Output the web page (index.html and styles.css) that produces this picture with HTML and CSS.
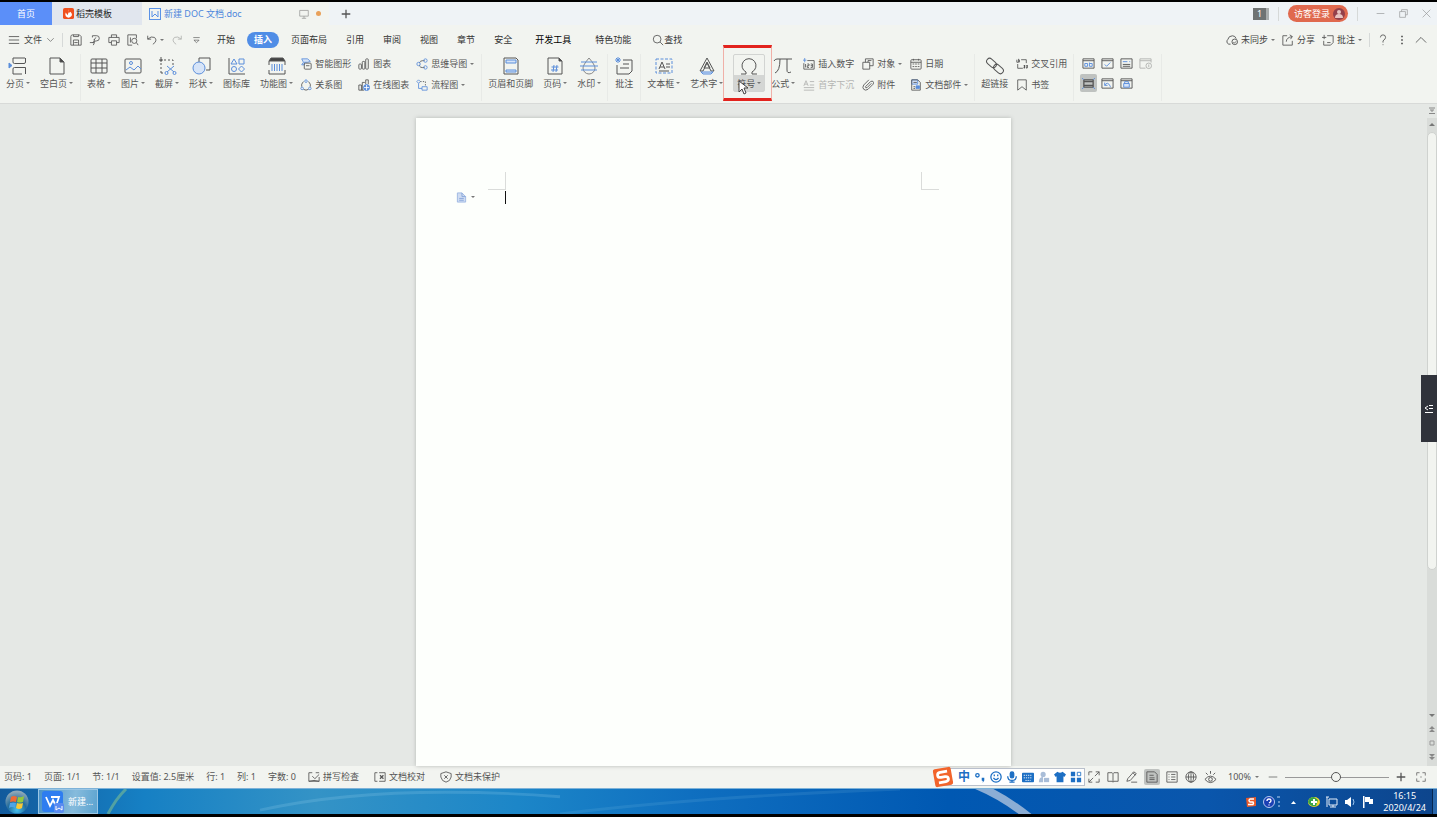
FILE: index.html
```html
<!DOCTYPE html>
<html lang="zh-CN">
<head>
<meta charset="utf-8">
<title>新建 DOC 文档.doc</title>
<link rel="stylesheet" href="styles.css">
</head>
<body>
<svg class="sprite" aria-hidden="true">
  <symbol id="break" viewBox="0 0 20 20"><path d="M5 2v4q0 1.500 1.500 1.500H16q1.500 0 1.500-1.500V2M5 18v-5q0-1.500 1.500-1.500h11V18M5 18h9M5 2h12"/><path class="bb" d="M1 7v5l3-2.500z"/></symbol>
  <symbol id="blank" viewBox="0 0 20 20"><path d="M3 2h10l4 4v12H3z"/><path class="k" d="M13 2v4h4z"/></symbol>
  <symbol id="table" viewBox="0 0 20 20"><rect x="2" y="3" width="16" height="14" rx="1"/><path d="M2 7h16M2 12h16M7 3v14M13 3v14"/></symbol>
  <symbol id="image" viewBox="0 0 20 20"><rect x="2" y="3" width="16" height="14" rx="1"/><path class="b" d="M3 14l4-3 4 3 4-4 3 3"/><circle class="b" cx="8" cy="7" r="1.500"/></symbol>
  <symbol id="snip" viewBox="0 0 20 20"><path stroke-dasharray="2 2" d="M4 17V4h12v6M4 17h4"/><path d="M2 4h4M4 1v5"/><path class="b" d="M10 10l7 6M17 10l-7 6"/><circle class="b" cx="9.500" cy="17" r="1.500"/><circle class="b" cx="17.500" cy="17" r="1.500"/></symbol>
  <symbol id="shapes" viewBox="0 0 20 20"><path d="M8 6V2h11v12h-4"/><circle class="bf" cx="8" cy="12" r="6"/></symbol>
  <symbol id="iconlib" viewBox="0 0 20 20"><path d="M2 2v16h16"/><path class="b" d="M7 3l3 5H4zM12 3h5v5h-5z"/><circle class="b" cx="7" cy="13" r="2.500"/><path class="b" d="M14.500 10l3 3-3 3-3-3z"/></symbol>
  <symbol id="barcode" viewBox="0 0 20 20"><path class="k" d="M4 2h12l2 3H2z"/><path d="M2 5v4M18 5v4M2 14v4h16v-4"/><path class="b" d="M5 8v7M7.500 8v7M10 8v7M12.500 8v7M15 8v7"/></symbol>
  <symbol id="header" viewBox="0 0 20 20"><path d="M3 2h12l2 2v14H3z"/><path class="bf" d="M5 4h10v3H5zM5 14h10v2H5z"/></symbol>
  <symbol id="pageno" viewBox="0 0 20 20"><path d="M3 2h11l3 3v13H3z"/><path class="k" d="M14 2v3h3z"/><path class="b" d="M9 9l-1 7M12 9l-1 7M6.500 11h7M6 14h7"/></symbol>
  <symbol id="water" viewBox="0 0 20 20"><path d="M10 2q6 7 6 10a6 6 0 0 1-12 0q0-3 6-10z" stroke="#888"/><path class="b" d="M2 6h16M1 10h18M2 14h16"/></symbol>
  <symbol id="comment" viewBox="0 0 20 20"><path d="M9 4h9v11l-3 3H3V9"/><path d="M9 8h6M6 12h9"/><path class="b" d="M1 4h6M4 1v6M2 2l4 4M6 2L2 6"/></symbol>
  <symbol id="textbox" viewBox="0 0 20 20"><rect class="b" stroke-dasharray="3 1.500" x="2" y="3" width="16" height="14"/><path d="M5 13l3-7 3 7M6 11h4M12 8h4M12 11h4M5 15h10"/></symbol>
  <symbol id="wordart" viewBox="0 0 20 20"><path d="M10 2l7 13h-3l-4-8-4 8H3zM7 12l3-6 3 6z"/><path class="bf" d="M4 16h12l-2 2H6z"/></symbol>
  <symbol id="omega" viewBox="0 0 20 20"><path d="M2 18h5v-2a7 7 0 1 1 6 0v2h5"/></symbol>
  <symbol id="pi" viewBox="0 0 20 20"><path d="M1 5q1-2 3-2h15M7 3q0 12-5 14M14 3v11q0 4 4 2"/></symbol>
  <symbol id="link" viewBox="0 0 20 20"><rect x="1" y="4" width="11" height="6" rx="3" transform="rotate(42 6.500 7)"/><rect x="8" y="10" width="11" height="6" rx="3" transform="rotate(42 13.500 13)"/></symbol>

  <symbol id="smart" viewBox="0 0 14 14"><path class="bf" d="M2 1h7l3 3-3 1H5v3H2l2-3z"/><rect x="5" y="6" width="8" height="7" rx="1"/><path d="M7 9h4"/></symbol>
  <symbol id="relation" viewBox="0 0 14 14"><path d="M4 3q-3 3-2 6M10 3q3 3 2 6M4 12q3 2 6 0"/><circle class="b" cx="7" cy="2.500" r="1.500"/><circle class="b" cx="2.500" cy="11" r="1.500"/><circle class="b" cx="11.500" cy="11" r="1.500"/></symbol>
  <symbol id="chart" viewBox="0 0 14 14"><rect x="1" y="7" width="3" height="6" rx="1"/><rect x="5" y="4" width="3" height="9" rx="1"/><rect x="9" y="1" width="3" height="12" rx="1"/></symbol>
  <symbol id="webchart" viewBox="0 0 14 14"><path d="M1 13V7h3v6M5 13V4h3M9 6V1h3v5M1 13h6"/><circle class="bb" cx="10" cy="10" r="3.500"/><path class="w" d="M7 10h6M10 7v6"/></symbol>
  <symbol id="mind" viewBox="0 0 14 14"><path d="M4 6q0-3 6-3M4 8q0 4 6 3"/><circle class="b" cx="3" cy="7" r="2"/><circle class="b" cx="11" cy="3" r="2"/><circle class="b" cx="11" cy="11" r="2"/></symbol>
  <symbol id="flow" viewBox="0 0 14 14"><path class="b" d="M3 1l2 2-2 2-2-2zM3 5v6h4M7 9h6v4H7z"/><path stroke-dasharray="1.500 1.500" d="M5 3h6v6"/></symbol>
  <symbol id="num" viewBox="0 0 14 14"><path d="M5 3h8v10H1V6M3 7v4M5 7h2v2H5v2h2M9 7h2v4H9M9 9h2"/><path class="b" d="M2 0v5M0 2.500h4"/></symbol>
  <symbol id="dropcap" viewBox="0 0 14 14"><path d="M1 8l2.500-6L6 8M2 6h3M8 3h5M8 7h5M1 10h12M1 13h12"/></symbol>
  <symbol id="object" viewBox="0 0 14 14"><path d="M4 5V1h9v8H9"/><path d="M1 5h8v8H1zM7 5V3h4"/></symbol>
  <symbol id="clip" viewBox="0 0 14 14"><path d="M11 5l-5 5q-2 1-2-1l6-6q2-1 3 0t0 3l-6 6q-3 2-5 0t0-5l6-6"/></symbol>
  <symbol id="date" viewBox="0 0 14 14"><rect x="1" y="2" width="12" height="11" rx="1"/><path d="M1 5h12M4 1v2M10 1v2M3 7h2M6 7h2M9 7h2M3 10h2M6 10h2M9 10h2"/></symbol>
  <symbol id="parts" viewBox="0 0 14 14"><path class="bf" d="M2 1h7v5H2z"/><path d="M2 1h7l3 3v9H2zM4 4h4M4 9h2M4 11h2"/><path class="bb" d="M7 8h4v3H7z"/></symbol>
  <symbol id="cross" viewBox="0 0 14 14"><path d="M1 2v3h2V1M4 2v3M6 2h6v4M2 7v5h6"/><path d="M9 9h1v2l-1 1M12 9h1v2l-1 1" stroke-width="1.500"/></symbol>
  <symbol id="mark" viewBox="0 0 14 14"><path d="M2 1h10v12L7 9l-5 4z"/></symbol>
  <symbol id="f1" viewBox="0 0 14 14"><path d="M1 2h12v10H1zM1 4h12"/><path class="b" d="M3 7h3v3H3zM8 6v4h3V7H8"/></symbol>
  <symbol id="f2" viewBox="0 0 14 14"><path d="M1 2h12v10H1zM1 4h12"/><path class="b" d="M4 8l2 2 4-4"/></symbol>
  <symbol id="f3" viewBox="0 0 14 14"><path d="M1 2h12v10H1zM3 8h8M3 10h8"/><path class="b" d="M3 5h5M10 5h1"/></symbol>
  <symbol id="f4" viewBox="0 0 14 14"><path d="M7 12H1V2h12v4M1 4h12"/><circle cx="10.500" cy="9.500" r="3"/><path d="M10.500 8v3"/></symbol>
  <symbol id="f5" viewBox="0 0 14 14"><path d="M2 3h10v8H2zM2 5h10M2 9h10" stroke-width="1.400"/><path class="b" d="M0 1l2 2M14 1l-2 2M0 13l2-2M14 13l-2-2"/></symbol>
  <symbol id="f6" viewBox="0 0 14 14"><path d="M1 2h12v10H1zM1 4h12"/><path class="b" d="M4 9q3-5 6 1v1M4 6v3h3"/></symbol>
  <symbol id="f7" viewBox="0 0 14 14"><path d="M1 2h12v10H1zM1 4h12"/><path class="bf" d="M4 7h6v4H4z"/><path class="b" d="M5 7V5h4v2"/></symbol>

  <symbol id="menu" viewBox="0 0 14 14"><path d="M1 3h12M1 7h12M1 11h12"/></symbol>
  <symbol id="down" viewBox="0 0 14 14"><path d="M2 5l5 5 5-5"/></symbol>
  <symbol id="up" viewBox="0 0 14 14"><path d="M1 10l6-6 6 6"/></symbol>
  <symbol id="save" viewBox="0 0 14 14"><path d="M1 3q0-2 2-2h8l2 2v10H1zM4 1v2h6V1M4 13V7h6v6M5 10h4"/></symbol>
  <symbol id="pdf" viewBox="0 0 14 14"><path d="M4 2h5a3 3 0 0 1 0 6q-3 0-5 2M4 2v2M6 6q1 5-1 7M1 10h5M8 4L6 7"/></symbol>
  <symbol id="print" viewBox="0 0 14 14"><path d="M4 4V1h6v3M4 10H1V4h12v6h-3M4 8h6v5H4z"/></symbol>
  <symbol id="preview" viewBox="0 0 14 14"><path d="M6 13H1V1h10v4M4 4v6"/><circle cx="8.500" cy="8" r="3"/><path d="M11 10l2 3"/></symbol>
  <symbol id="undo" viewBox="0 0 14 14"><path d="M2 2v4h4M2 6q4-4 8-2 4 4-2 8"/></symbol>
  <symbol id="redo" viewBox="0 0 14 14"><path d="M12 2v4H8M12 6Q8 2 4 4q-4 4 2 8"/></symbol>
  <symbol id="more" viewBox="0 0 14 14"><path d="M2 4h10M3 8l4 4 4-4z"/></symbol>
  <symbol id="search" viewBox="0 0 14 14"><circle cx="6" cy="6" r="4.500"/><path d="M9.500 9.500L13 13"/></symbol>
  <symbol id="cloud" viewBox="0 0 14 14"><path d="M6 12H4a3 3 0 0 1-1-5q1-4 5-4 3 0 4 3"/><circle cx="10.500" cy="9.500" r="3"/><path d="M9 10l1 1 2-2"/></symbol>
  <symbol id="share" viewBox="0 0 14 14"><path d="M6 2H1v11h11V8M5 9q0-5 7-6M9 1l3 2-2 3"/></symbol>
  <symbol id="note" viewBox="0 0 14 14"><path d="M6 2h7v8l-3 3H2V8M0 4h5M2.500 1v5M6 10h4"/></symbol>
  <symbol id="help" viewBox="0 0 14 14"><path d="M4 4q0-3 3-3t3 3q0 2-3 4v2M7 12v1"/></symbol>
  <symbol id="dots" viewBox="0 0 14 14"><path stroke-width="1.800" d="M6 3h2M6 7h2M6 11h2"/></symbol>
  <symbol id="monitor" viewBox="0 0 14 14"><path d="M1 2h12v8H1zM7 10v3M4 13h6"/></symbol>
  <symbol id="plus" viewBox="0 0 14 14"><path stroke-width="1.800" d="M7 1v12M1 7h12"/></symbol>
  <symbol id="minus" viewBox="0 0 14 14"><path d="M1 7h12"/></symbol>
  <symbol id="restore" viewBox="0 0 14 14"><path d="M4 4V1h9v8h-3M1 4h9v9H1z"/></symbol>
  <symbol id="close" viewBox="0 0 14 14"><path d="M1 1l12 12M13 1L1 13"/></symbol>

  <symbol id="spell" viewBox="0 0 14 14"><path d="M5 2H1v10h12V7M9 2h4M1 12l6-1 6 1M5 6l3 3 5-5"/></symbol>
  <symbol id="proof" viewBox="0 0 14 14"><path d="M4 2H1v10h3M6 2h7v10H6"/><path stroke-width="1.500" d="M7 5l4 4M11 5L7 9"/></symbol>
  <symbol id="shield" viewBox="0 0 14 14"><path d="M7 1l6 2v4q-1 5-6 6-5-1-6-6V3zM5 5l4 4M9 5L5 9"/></symbol>
  <symbol id="expand" viewBox="0 0 14 14"><path d="M5 1H1v4M9 1h4v4M1 9v4h4M13 9v4H9M13 1L8 6M1 13l5-5"/></symbol>
  <symbol id="book" viewBox="0 0 14 14"><path d="M1 2h5l1 1 1-1h5v10H8l-1 1-1-1H1zM7 3v10"/></symbol>
  <symbol id="pen" viewBox="0 0 14 14"><path d="M2 9l7-8 3 2-7 8-4 1zM6 13h7M8 2l3 3"/></symbol>
  <symbol id="doc" viewBox="0 0 14 14"><path d="M1 1h9l3 3v9H1zM4 5h5M4 8h6M4 10h6"/></symbol>
  <symbol id="outline" viewBox="0 0 14 14"><path d="M1 1h12v12H1zM3 4h1M6 4h5M3 7h1M6 7h5M3 10h1M6 10h5"/></symbol>
  <symbol id="globe" viewBox="0 0 14 14"><circle cx="7" cy="7" r="6"/><ellipse cx="7" cy="7" rx="3" ry="6"/><path d="M1 7h12M7 1v12"/></symbol>
  <symbol id="eye" viewBox="0 0 14 14"><path d="M1 9q6-7 12 0-6 7-12 0zM2 2l2 2M7 0v3M12 2l-2 2"/><circle cx="7" cy="9" r="2"/></symbol>
  <symbol id="full" viewBox="0 0 14 14"><path d="M5 1H1v4M9 1h4v4M1 9v4h4M13 9v4H9M6 7h2"/></symbol>
</svg>

<header class="titlebar">
  <nav class="doctabs">
    <button class="doctab home">首页</button>
    <button class="doctab shell">
      <svg class="s11" viewBox="0 0 12 12"><rect width="12" height="12" rx="2" fill="#f0501e"/><path d="M6 1q1 3 0 4 2 0 2-1 3 3 1 5-3 3-6 0-1-2 0-4l2 3q2-3 1-7z" fill="#fff"/></svg>
      稻壳模板</button>
    <button class="doctab active">
      <svg class="s12" viewBox="0 0 12 12" fill="none" stroke="#5a92e6"><rect x=".5" y=".5" width="11" height="11"/><path d="M3 3v6l3-3 3 3V3"/></svg>
      <span>新建 DOC 文档.doc</span>
      <svg class="i s10 dim"><use href="#monitor"/></svg><i class="dot"></i></button>
    <button class="newtab" aria-label="新建"><svg class="i s10"><use href="#plus"/></svg></button>
  </nav>
  <div class="winctl">
    <span class="count">1</span><i class="vsep"></i>
    <button class="login">访客登录 <svg class="s12" viewBox="0 0 12 12"><circle cx="6" cy="6" r="6" fill="#94404a"/><circle cx="6" cy="4" r="2" fill="#e8c4c0"/><path d="M2 10q0-4 4-4t4 4z" fill="#e8c4c0"/></svg></button>
    <i class="vsep"></i>
    <button aria-label="最小化"><svg class="i s9 dim"><use href="#minus"/></svg></button>
    <button aria-label="还原"><svg class="i s9 dim"><use href="#restore"/></svg></button>
    <button aria-label="关闭"><svg class="i s9 dim"><use href="#close"/></svg></button>
  </div>
</header>

<div class="menubar">
  <div class="quick">
    <button class="file"><svg class="i s12"><use href="#menu"/></svg>文件<svg class="i s9"><use href="#down"/></svg></button>
    <i class="vsep"></i>
    <button aria-label="保存"><svg class="i s12"><use href="#save"/></svg></button>
    <button aria-label="输出为PDF"><svg class="i s12"><use href="#pdf"/></svg></button>
    <button aria-label="打印"><svg class="i s12"><use href="#print"/></svg></button>
    <button aria-label="打印预览"><svg class="i s12"><use href="#preview"/></svg></button>
    <button class="c" aria-label="撤销"><svg class="i s12"><use href="#undo"/></svg></button>
    <button class="off" aria-label="恢复"><svg class="i s12"><use href="#redo"/></svg></button>
    <button class="qmore" aria-label="更多"><svg class="i s9"><use href="#more"/></svg></button>
  </div>
  <nav class="tabs">
    <button>开始</button><button class="on">插入</button><button>页面布局</button><button>引用</button><button>审阅</button><button>视图</button><button>章节</button><button>安全</button><button class="dev">开发工具</button><button class="dev2">特色功能</button>
    <button class="find"><svg class="i s12"><use href="#search"/></svg>查找</button>
  </nav>
  <div class="account">
    <button class="c"><svg class="i s13"><use href="#cloud"/></svg>未同步</button>
    <button><svg class="i s12"><use href="#share"/></svg>分享</button>
    <button class="c"><svg class="i s12"><use href="#note"/></svg>批注</button>
    <i class="vsep"></i>
    <button aria-label="帮助"><svg class="i s12"><use href="#help"/></svg></button>
    <button aria-label="更多"><svg class="i s12"><use href="#dots"/></svg></button>
    <button aria-label="收起"><svg class="i s12"><use href="#up"/></svg></button>
  </div>
</div>

<div class="ribbon">
  <section><div class="bigs">
    <button class="big"><svg class="i s20"><use href="#break"/></svg><span class="c">分页</span></button>
    <button class="big"><svg class="i s20"><use href="#blank"/></svg><span class="c">空白页</span></button>
  </div></section>
  <section><div class="bigs">
    <button class="big"><svg class="i s20"><use href="#table"/></svg><span class="c">表格</span></button>
    <button class="big"><svg class="i s20"><use href="#image"/></svg><span class="c">图片</span></button>
    <button class="big"><svg class="i s20"><use href="#snip"/></svg><span class="c">截屏</span></button>
    <button class="big"><svg class="i s20"><use href="#shapes"/></svg><span class="c">形状</span></button>
    <button class="big"><svg class="i s20"><use href="#iconlib"/></svg><span>图标库</span></button>
    <button class="big"><svg class="i s20"><use href="#barcode"/></svg><span class="c">功能图</span></button>
  </div>
    <div class="col"><button><svg class="i s12"><use href="#smart"/></svg>智能图形</button><button><svg class="i s12"><use href="#relation"/></svg>关系图</button></div>
    <div class="col"><button><svg class="i s12"><use href="#chart"/></svg>图表</button><button><svg class="i s12"><use href="#webchart"/></svg>在线图表</button></div>
    <div class="col"><button class="c"><svg class="i s12"><use href="#mind"/></svg>思维导图</button><button class="c"><svg class="i s12"><use href="#flow"/></svg>流程图</button></div>
  </section>
  <section class="tight"><div class="bigs">
    <button class="big"><svg class="i s20"><use href="#header"/></svg><span>页眉和页脚</span></button>
    <button class="big"><svg class="i s20"><use href="#pageno"/></svg><span class="c">页码</span></button>
    <button class="big"><svg class="i s20"><use href="#water"/></svg><span class="c">水印</span></button>
  </div></section>
  <section class="tight"><div class="bigs">
    <button class="big"><svg class="i s20"><use href="#comment"/></svg><span>批注</span></button>
  </div></section>
  <section class="tight wide"><div class="bigs">
    <button class="big"><svg class="i s20"><use href="#textbox"/></svg><span class="c">文本框</span></button>
    <button class="big"><svg class="i s20"><use href="#wordart"/></svg><span class="c">艺术字</span></button>
    <div class="symbol">
      <button class="big hot"><svg class="i s20"><use href="#omega"/></svg><span class="c">符号</span></button>
      <div class="frame"></div>
      <svg class="pointer" viewBox="0 0 10 15"><path d="M1 1v11l3-3 2 5 2-1-2-5h4z" fill="#fff" stroke="#444"/></svg>
    </div>
    <button class="big"><svg class="i s20"><use href="#pi"/></svg><span class="c">公式</span></button>
  </div>
    <div class="col"><button><svg class="i s12"><use href="#num"/></svg>插入数字</button><button class="off" disabled><svg class="i s12"><use href="#dropcap"/></svg>首字下沉</button></div>
    <div class="col"><button class="c"><svg class="i s12"><use href="#object"/></svg>对象</button><button><svg class="i s12"><use href="#clip"/></svg>附件</button></div>
    <div class="col"><button><svg class="i s12"><use href="#date"/></svg>日期</button><button class="c"><svg class="i s12"><use href="#parts"/></svg>文档部件</button></div>
  </section>
  <section class="tight wide"><div class="bigs">
    <button class="big"><svg class="i s20"><use href="#link"/></svg><span>超链接</span></button>
  </div>
    <div class="col"><button><svg class="i s12"><use href="#cross"/></svg>交叉引用</button><button><svg class="i s12"><use href="#mark"/></svg>书签</button></div>
  </section>
  <section><div class="forms">
    <button aria-label="文字型窗体域"><svg class="i s13"><use href="#f1"/></svg></button>
    <button aria-label="复选框"><svg class="i s13"><use href="#f2"/></svg></button>
    <button aria-label="下拉型窗体域"><svg class="i s13"><use href="#f3"/></svg></button>
    <button class="off" aria-label="窗体域选项" disabled><svg class="i s13"><use href="#f4"/></svg></button>
    <button class="pressed" aria-label="窗体域底纹"><svg class="i s13"><use href="#f5"/></svg></button>
    <button aria-label="重新设置窗体域"><svg class="i s13"><use href="#f6"/></svg></button>
    <button aria-label="保护窗体"><svg class="i s13"><use href="#f7"/></svg></button>
  </div></section>
</div>

<main class="work">
  <div class="desk">
    <article class="page">
      <div class="corners"><i class="tl"></i><i class="tr"></i></div>
      <div class="line">
        <button class="c" aria-label="粘贴选项"><svg class="s11" viewBox="0 0 11 12"><path d="M1 1h5l4 4v6H1z" fill="#cfdcf2" stroke="#9db7e2"/><path d="M6 1v4h4M3 7h5M3 9h5" stroke="#86a5da" fill="none"/></svg></button>
        <i class="cursor"></i>
      </div>
    </article>
  </div>
  <div class="scroll">
    <button class="ruler" aria-label="标尺"><svg viewBox="0 0 8 8" fill="none" stroke="#888"><path d="M1 1h6M2 3h4M4 3v2M1 6.500h6"/></svg></button>
    <div class="track">
      <button aria-label="向上"><svg viewBox="0 0 8 8" fill="#777"><path d="M1 5h6L4 2z"/></svg></button>
      <div class="rail"><div class="thumb"></div></div>
      <button aria-label="向下"><svg viewBox="0 0 8 8" fill="#777"><path d="M1 3h6L4 6z"/></svg></button>
      <button aria-label="上一页"><svg viewBox="0 0 8 8" fill="#888"><path d="M1 4h6L4 1zM1 7h6L4 4z"/></svg></button>
      <button aria-label="选择浏览对象"><svg viewBox="0 0 8 8" fill="none" stroke="#999"><path d="M2 2h4v4H2z"/></svg></button>
      <button aria-label="下一页"><svg viewBox="0 0 8 8" fill="#888"><path d="M1 1h6L4 4zM1 4h6L4 7z"/></svg></button>
    </div>
  </div>
  <button class="drawer" aria-label="展开侧栏"><svg viewBox="0 0 10 10" fill="none" stroke="#fff"><path d="M5 1.500h4M5 4.500h4M1 8.500h8M4 2L1 4l3 2"/></svg></button>
</main>

<footer class="status">
  <div class="info">
    <span>页码: 1</span><span>页面: 1/1</span><span>节: 1/1</span><span>设置值: 2.5厘米</span><span>行: 1</span><span>列: 1</span><span>字数: 0</span>
    <button><svg class="i s12"><use href="#spell"/></svg>拼写检查</button>
    <button><svg class="i s12"><use href="#proof"/></svg>文档校对</button>
    <button><svg class="i s12"><use href="#shield"/></svg>文档未保护</button>
  </div>
  <div class="views">
    <div class="ime">
      <svg class="slogo" viewBox="0 0 22 22"><g transform="rotate(-10 11 11)"><rect x="2" y="2" width="18" height="18" rx="2" fill="#f2642b"/><path d="M16 6H9q-3 0-3 2.500T9 11h4q3 0 3 2.500T13 16H6" fill="none" stroke="#fff" stroke-width="2.800"/></g></svg>
      <b>中</b>
      <svg class="s12" viewBox="0 0 14 14"><circle cx="4" cy="5" r="2" fill="none" stroke="#1d6fc4" stroke-width="1.500"/><path d="M9 8h3v3l-2 3q1-3-1-3z" fill="#1d6fc4"/></svg>
      <svg class="s12" viewBox="0 0 14 14" fill="none" stroke="#1d6fc4" stroke-width="1.500"><circle cx="7" cy="7" r="6"/><path d="M4 8q3 4 6 0M5 4v2M9 4v2"/></svg>
      <svg class="s12" viewBox="0 0 14 14" fill="none" stroke="#1d6fc4" stroke-width="1.500"><rect x="5" y="1" width="4" height="7" rx="2" fill="#1d6fc4"/><path d="M2 6q0 5 5 5t5-5M7 11v2M4 13h6"/></svg>
      <svg class="s12" viewBox="0 0 14 14"><rect x="0" y="2" width="14" height="11" rx="1" fill="#1d6fc4"/><path d="M2 5h10M2 8h10M4 11h6" stroke="#fff" stroke-dasharray="1.500 1"/></svg>
      <svg class="s12" viewBox="0 0 14 14" fill="#a9bdd8"><circle cx="6" cy="4" r="3"/><path d="M1 13q0-6 5-6v6z"/><rect x="7" y="8" width="6" height="5"/></svg>
      <svg class="s12" viewBox="0 0 14 14" fill="#1d6fc4"><path d="M4 1q3 2 6 0l4 3-2 3-1-1v7H3V6L2 7 0 4z"/></svg>
      <svg class="s12" viewBox="0 0 14 14" fill="#1d6fc4"><path d="M1 1h5v5H1zM1 8h5v5H1zM8 8h5v5H8z"/><path d="M8.500 1.500h4v4h-4z" fill="none" stroke="#1d6fc4"/></svg>
    </div>
    <button aria-label="全屏"><svg class="i s12"><use href="#expand"/></svg></button>
    <button aria-label="阅读版式"><svg class="i s12"><use href="#book"/></svg></button>
    <button aria-label="写作模式"><svg class="i s12"><use href="#pen"/></svg></button>
    <button class="pressed" aria-label="页面视图"><svg class="i s12"><use href="#doc"/></svg></button>
    <button aria-label="大纲"><svg class="i s12"><use href="#outline"/></svg></button>
    <button aria-label="Web版式"><svg class="i s12"><use href="#globe"/></svg></button>
    <button aria-label="护眼模式"><svg class="i s13"><use href="#eye"/></svg></button>
    <button class="c zoom">100%</button>
    <button aria-label="缩小"><svg class="i s10 thick"><use href="#minus"/></svg></button>
    <input type="range" aria-label="显示比例" min="0" max="100" value="49">
    <button aria-label="放大"><svg class="i s10"><use href="#plus"/></svg></button>
    <button class="fit" aria-label="最佳显示比例"><svg class="i s10"><use href="#full"/></svg></button>
  </div>
</footer>

<div class="taskbar">
  <svg class="streaks" viewBox="0 0 1437 26" preserveAspectRatio="none" fill="none">
    <path d="M126 0q-10 10-18 26" stroke="#8fc98a" stroke-width="3" opacity=".5"/>
    <path d="M260 22Q380-6 560 8" stroke="#9fd6ee" stroke-width="3" opacity=".2"/>
    <path d="M560 26Q700 8 900 0" stroke="#9fd6ee" stroke-width="3" opacity=".12"/>
    <path d="M976-4q28 12 54 34" stroke="#c6d2e4" stroke-width="8" opacity=".7"/>
  </svg>
  <div class="apps">
    <button class="start" aria-label="开始"><svg viewBox="0 0 24 24"><defs><radialGradient id="orb" cx=".5" cy=".85" r=".8"><stop offset="0" stop-color="#45c0ee"/><stop offset=".5" stop-color="#246c9c"/><stop offset="1" stop-color="#8fa8b8"/></radialGradient></defs><circle cx="12" cy="12" r="11.500" fill="url(#orb)"/><path d="M6 7q3-2 6 0l-1 5q-3-1-6 0z" fill="#ee6a35"/><path d="M13 7q3 1 6-1l-1 6q-3 1-6 0z" fill="#94c83d"/><path d="M5 13q3-1 6 0l-1 5q-3-2-6 0z" fill="#4fa4e8"/><path d="M12 13q3 1 6 0l-1 5q-3 2-6 0z" fill="#fbc935"/></svg></button>
    <button class="app"><svg viewBox="0 0 22 22"><rect width="21" height="21" rx="3" fill="#2e7df0"/><path d="M4 6l4 9 3-6 3 6 3-9H9" fill="none" stroke="#fff" stroke-width="1.800"/><rect x="12" y="12" width="10" height="10" rx="2" fill="#5a8bf0"/><path d="M14 15v4l3-2 3 2v-4" fill="none" stroke="#fff"/></svg>新建...</button>
  </div>
  <div class="tray">
    <svg class="s12" viewBox="0 0 12 12"><path d="M1 2l10-1v9L2 11z" fill="#e85a2a"/><path d="M9 3H5q-2 1.500 0 3h3q1 1.500 0 2.500H3" fill="none" stroke="#fff" stroke-width="1.500"/></svg>
    <svg class="s12" viewBox="0 0 12 12"><circle cx="6" cy="6" r="5.500" fill="#1a3fb4" stroke="#b9c8ee"/><path d="M4 5q0-2 2-2t2 1.500Q8 6 6 7M6 8.500v1" fill="none" stroke="#fff" stroke-width="1.300"/></svg>
    <svg class="tiny" viewBox="0 0 4 12"><path d="M0 1h3M1 6h2M1 10h2" stroke="#b9d4f0"/></svg>
    <svg class="arrow" viewBox="0 0 8 8"><path d="M1 6h5L3.500 3z" fill="#fff"/></svg>
    <svg class="s12" viewBox="0 0 12 12"><ellipse cx="6" cy="6" rx="6" ry="5" fill="#f3d22c"/><path d="M0 6q1-5 6-5l4 3-2 6q-6 1-8-4z" fill="#3aa648"/><path d="M6 3v6M3 6h6" stroke="#fff" stroke-width="2"/></svg>
    <svg class="s12" viewBox="0 0 12 12" fill="none" stroke="#e6eef8"><path d="M3 3h8v6H3zM7 9v2M4 11h6M1 1v10M0 1h3"/></svg>
    <svg class="s12" viewBox="0 0 12 12"><path d="M1 4h2l4-3v10L3 8H1z" fill="#fff"/><path d="M9 3q2 3 0 6" fill="none" stroke="#9cc4ec"/></svg>
    <svg class="s12" viewBox="0 0 12 12" fill="#fff"><path d="M1 0h1.500v12H1zM3 1h5v2h3v5H7V6H3z"/></svg>
    <time>16:15<br>2020/4/24</time>
    <i class="peek"></i>
  </div>
</div>
</body>
</html>
```
FILE: styles.css
```css
* { box-sizing: border-box; }
body {
  margin: 0;
  min-height: 100vh;
  display: flex;
  flex-direction: column;
  background: #f2f4f0;
  border-top: 2px solid #000;
  border-bottom: 3px solid #000;
  font: 9px/12px "Noto Sans", "Noto Sans CJK SC", sans-serif;
  color: #444;
  white-space: nowrap;
  overflow: hidden;
}
button {
  display: flex;
  align-items: center;
  gap: 3px;
  margin: 0;
  padding: 0;
  border: 0;
  background: none;
  font: inherit;
  color: inherit;
}
svg { display: block; flex: none; }
.sprite { position: absolute; width: 0; height: 0; }
.i, symbol { fill: none; stroke: #555; stroke-width: 1; }
.b { stroke: #5b8edb; }
.bf { stroke: #5b8edb; fill: #d6e4f8; }
.bb { stroke: #5b8edb; fill: #5b8edb; }
.k { fill: #444; }
.w { stroke: #fff; }
.s9 { width: 9px; height: 9px; }
.s10 { width: 10px; height: 10px; }
.s11 { width: 11px; height: 11px; }
.s12 { width: 12px; height: 12px; }
.s13 { width: 13px; height: 13px; }
.s20 { width: 20px; height: 20px; }
.dim { opacity: .6; }
.thick { stroke-width: 2; }
.off { opacity: .4; }
.c::after {
  content: "";
  flex: none;
  border: 2px solid transparent;
  border-top-color: #777;
  border-bottom: 0;
}
.vsep { width: 1px; height: 14px; background: #d6d9d8; }

/* Title bar */
.titlebar {
  height: 23px;
  display: flex;
  justify-content: space-between;
  background: #eff3f6;
}
.doctabs { display: flex; }
.doctab { height: 23px; }
.home { width: 52px; justify-content: center; background: #5b8ff9; color: #fff; }
.shell { width: 90px; padding-left: 11px; gap: 2px; background: #e1e6ee; color: #222; }
.active { width: 187px; padding: 0 8px 0 7px; background: #f2f4f0; color: #4d86dc; }
.active span { flex: 1; text-align: left; }
.dot { width: 5px; height: 5px; margin-left: 4px; border-radius: 50%; background: #e9a15a; }
.newtab { padding: 0 12px; }
.winctl { display: flex; align-items: center; gap: 9px; padding-right: 6px; }
.winctl button + button { margin-left: 5px; }
.winctl .vsep + button:not(.login) { margin-left: 9px; }
.count { width: 16px; text-align: center; background: #6f7373; border-right: 3px solid #a9adad; color: #fff; }
.login { height: 17px; padding: 0 3px 0 6px; border-radius: 9px; background: #e0694e; color: #fff; }

/* Menu bar */
.menubar { height: 29px; display: flex; align-items: center; }
.quick { display: flex; align-items: center; gap: 7px; padding-left: 8px; }
.file { gap: 4px; }
.quick .c { gap: 2px; }
.qmore { margin-left: 2px; }
.tabs { display: flex; flex: 1; gap: 5px; padding-left: 9px; }
.tabs button { height: 16px; padding: 0 7px; border-radius: 8px; color: #333; }
.tabs .on { background: #508de6; color: #fff; font-weight: bold; }
.tabs .dev { margin-left: 4px; color: #000; }
.tabs .dev2 { margin-left: 5px; }
.tabs .find { margin-left: 2px; gap: 0; }
.account { display: flex; align-items: center; gap: 7px; padding-right: 10px; }

/* Ribbon */
.ribbon {
  height: 50px;
  display: flex;
  border-bottom: 1px solid #d8dad8;
  color: #555;
}
.ribbon section {
  display: flex;
  gap: 7px;
  height: 47px;
  padding: 2px 7px 0 6px;
  border-right: 1px solid #e8eae7;
}
.ribbon .tight { padding-right: 6px; }
.ribbon .wide { gap: 8px; }
.bigs { display: flex; gap: 10px; align-items: flex-start; }
.big { flex-direction: column; gap: 2px; }
.big span { display: flex; gap: 2px; }
.big .c::after { margin-top: 4px; }
.col { display: flex; flex-direction: column; gap: 9px; padding-top: 2px; }
.symbol { position: relative; margin: -2px -4px 0 0; }
.hot {
  width: 32px;
  height: 38px;
  padding: 1px 0 0;
  border: 1px solid #d2d4d2;
  border-radius: 2px;
  background: linear-gradient(#f2f4f0 20px, #d4d6d4 20px);
}
.frame {
  position: absolute;
  inset: -9px -7px -9px -10px;
  border: 1px solid #f0b0a8;
  border-width: 3px 1px;
  border-top-color: #e2231e;
  border-bottom-color: #e2231e;
}
.pointer { position: absolute; left: 5px; top: 26px; width: 10px; height: 15px; }
.forms {
  display: grid;
  grid-template-columns: repeat(4, 17px);
  gap: 2px;
  align-content: start;
  margin-top: -2px;
}
.forms button { height: 18px; justify-content: center; }
.pressed { background: #bfc2c0; border-radius: 2px; }

/* Document area */
.work { position: relative; flex: 1; display: flex; background: #e5e8e5; }
.desk { flex: 1; display: flex; justify-content: center; padding-top: 14px; }
.page {
  width: 595px;
  padding: 54px 72px 0;
  background: #fdfffc;
  box-shadow: 0 0 4px #b4b7b4;
}
.corners { display: flex; justify-content: space-between; }
.corners i { width: 18px; height: 18px; border-bottom: 1px solid #dadcda; }
.tl { border-right: 1px solid #dadcda; }
.tr { border-left: 1px solid #dadcda; }
.line { display: flex; align-items: center; justify-content: space-between; width: 50px; height: 14px; margin-left: -32px; }
.line button { gap: 4px; }
.cursor { width: 1px; height: 13px; background: #111; }
.scroll { width: 10px; display: flex; flex-direction: column; }
.scroll svg { width: 8px; height: 8px; }
.scroll button { height: 14px; justify-content: center; width: 10px; }
.track { flex: 1; display: flex; flex-direction: column; background: #d9dcd9; padding-bottom: 2px; }
.rail { flex: 1; }
.thumb { height: 76%; border: 1px solid #cfd2cf; border-radius: 5px; background: #f2f4f0; }
.drawer {
  position: absolute;
  right: 0;
  top: 41%;
  width: 16px;
  height: 67px;
  justify-content: center;
  background: #30333b;
}
.drawer svg { width: 10px; height: 10px; }

/* Status bar */
.status { height: 22px; display: flex; justify-content: space-between; color: #555; }
.info { display: flex; align-items: center; gap: 12px; padding-left: 4px; }
.info button + button { margin-left: 3px; }
.views { position: relative; display: flex; align-items: center; gap: 7px; padding-right: 11px; }
.views .pressed { margin: 0 -1px; padding: 2px; }
.views .zoom { margin: 0 2px 0 4px; gap: 4px; }
.views .fit { margin-left: 3px; }
.views input {
  appearance: none;
  width: 104px;
  height: 11px;
  margin: 0;
  background: linear-gradient(#999, #999) center / 100% 1px no-repeat;
}
.views input::-webkit-slider-thumb {
  appearance: none;
  width: 10px;
  height: 10px;
  border: 1px solid #555;
  border-radius: 50%;
  background: #f2f4f0;
}
.ime {
  position: absolute;
  right: 100%;
  display: flex;
  align-items: center;
  gap: 4px;
  height: 18px;
  margin-right: 3px;
  padding: 0 2px 0 14px;
  border: 1px solid #b9c0cc;
  background: #fff;
  color: #1d6fc4;
}
.ime b { font-size: 12px; }
.slogo { position: absolute; left: -12px; top: -3px; width: 22px; height: 22px; }

/* Taskbar */
.taskbar {
  position: relative;
  height: 26px;
  display: flex;
  justify-content: space-between;
  border-top: 1px solid #7db2d8;
  background: linear-gradient(90deg, #125a9c 0, #1680c4 10%, #3493c6 22%, #1c86c8 36%, #0f6fc0 48%, #0058b2 66%, #0a56ac 84%, #0d458c 100%);
  color: #fff;
}
.streaks { position: absolute; inset: 0; width: 100%; height: 100%; }
.apps, .tray { position: relative; display: flex; align-items: center; }
.apps { gap: 9px; padding-left: 5px; }
.start svg { width: 24px; height: 24px; }
.app {
  height: 25px;
  width: 60px;
  padding-left: 3px;
  gap: 4px;
  border: 1px solid #9ac6e4;
  background: linear-gradient(100deg, #4a92c8, #86bbdc 60%, #5ba3d0);
}
.app svg { width: 22px; height: 22px; }
.tray { gap: 6px; }
.tray .tiny { width: 4px; height: 12px; margin-left: -4px; }
.tray .arrow { width: 8px; height: 8px; margin: 0 4px 0 3px; }
.tray time { margin-left: 3px; text-align: center; }
.peek { width: 5px; height: 25px; border-left: 1px solid #06264f; background: #2a68ac; }
```
